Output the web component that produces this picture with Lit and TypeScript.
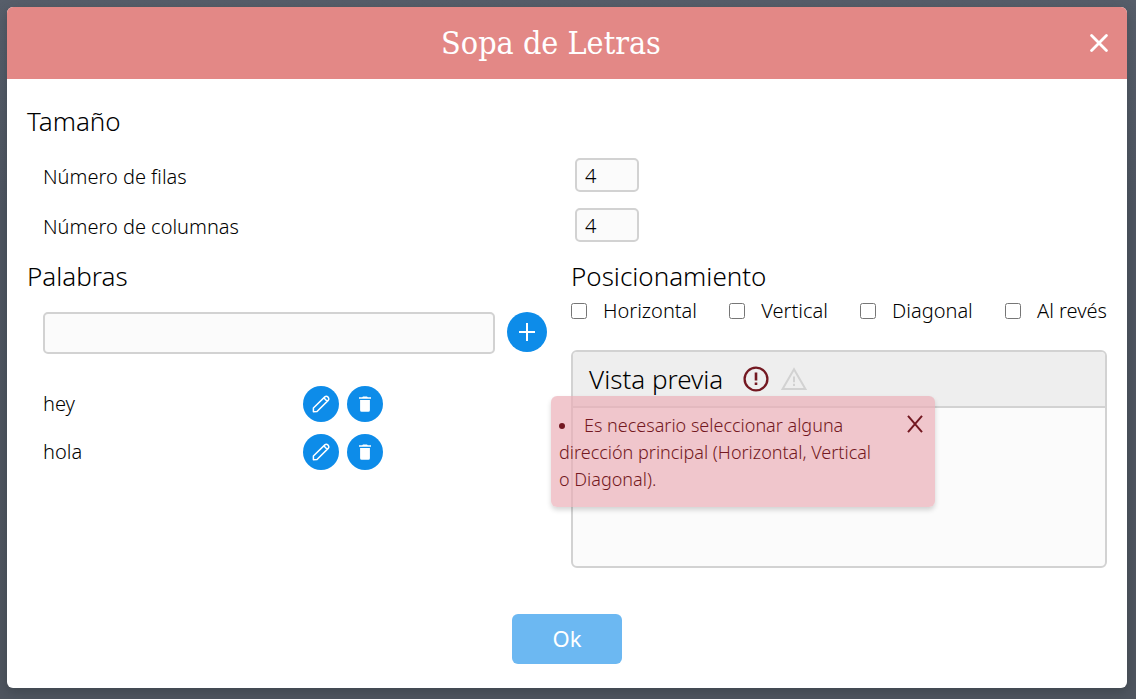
import { LitElement, html, css, svg } from "lit";
import { customElement, state } from "lit/decorators.js";

const icons = {
  close: svg`<svg viewBox="0 0 18 18" width="18" height="18" fill="none" stroke="currentColor" stroke-width="2.8" stroke-linecap="round"><path d="M1.6 1.6 16.4 16.4M16.4 1.6 1.6 16.4"/></svg>`,
  dismiss: svg`<svg viewBox="0 0 16 18" width="16" height="18" fill="none" stroke="currentColor" stroke-width="2"><path d="M1 .8 15 17.2M15 .8 1 17.2"/></svg>`,
  plus: svg`<svg viewBox="0 0 18 18" width="18" height="18" fill="none" stroke="currentColor" stroke-width="2"><path d="M9 0V18M1 9H17"/></svg>`,
  pencil: svg`<svg viewBox="0 0 18 18" width="18" height="18" fill="none" stroke="currentColor" stroke-width="1.5" stroke-linejoin="round"><path d="M1.4 16.8V13L12.8 1.9Q14.4 .6 16 2.1 17.5 3.8 16.2 5.4L5 16.5ZM12 3 15.1 6.2"/></svg>`,
  trash: svg`<svg viewBox="0 0 14 17" width="14" height="17" fill="currentColor"><path d="M1 1.2H4.2L5 .4H9L9.8 1.2H13V2.8H1ZM2.1 4H11.9V14.2Q11.9 15.8 10.3 15.8H3.7Q2.1 15.8 2.1 14.2Z"/></svg>`,
  error: svg`<svg viewBox="0 0 26 26" width="26" height="26" fill="none" stroke="#731821" stroke-width="2.3"><circle cx="13" cy="13" r="11.4"/><path d="M13 6.6V14.4M13 16.4V19" stroke-width="2.6"/></svg>`,
  warning: svg`<svg viewBox="0 0 26 24" width="26" height="24" fill="none" stroke="#d2d2d2" stroke-width="2"><path d="M13 2.2 24.4 22H1.6Z"/><path d="M13 9.4V15.2M13 16.8V19"/></svg>`,
};

@customElement("app-root")
export class AppRoot extends LitElement {
  @state() private words = ["hey", "hola"];
  @state() private showError = true;

  private directions = ["Horizontal", "Vertical", "Diagonal", "Al revés"];

  static styles = css`
    :host {
      display: block;
      box-sizing: border-box;
      min-height: 100vh;
      padding: 7px 9px 11px 7px;
      background: linear-gradient(#575e6a, #4e5561 30%, #4f555f);
      font: 300 20px/28px "Noto Sans", "Open Sans", sans-serif;
      color: #000;
    }
    * { box-sizing: border-box; }
    .modal {
      display: flex;
      flex-direction: column;
      min-height: calc(100vh - 18px);
      border-radius: 6px;
      overflow: hidden;
      background: #fff;
      box-shadow: 0 4px 12px rgba(40, 50, 56, 0.4);
    }
    .header {
      display: flex;
      align-items: center;
      padding: 0 12px;
      height: 72px;
      background: #e38886;
      color: #fff;
    }
    h1 {
      flex: 1;
      margin: 0;
      text-align: center;
      font: 400 32px/40px "Roboto Slab", "DejaVu Serif Condensed", "DejaVu Serif", serif;
    }
    h2 {
      margin: 0;
      font-size: 26px;
      line-height: 36px;
      font-weight: 300;
    }
    button {
      display: flex;
      align-items: center;
      justify-content: center;
      padding: 0;
      border: 0;
      background: none;
      color: inherit;
      font: inherit;
      cursor: pointer;
    }
    svg { display: block; }
    .close { width: 32px; height: 32px; }
    .body {
      flex: 1;
      display: flex;
      flex-direction: column;
      padding: 24px 20px;
    }
    .sizes {
      display: grid;
      gap: 16px;
      padding: 19px 16px 16px;
    }
    .size {
      display: grid;
      grid-template-columns: 1fr 1fr;
      align-items: center;
      column-gap: 16px;
    }
    .size label { padding-top: 4px; }
    input[type="text"],
    input[type="number"] {
      border: 2px solid #d2d2d2;
      border-radius: 5px;
      background: #fbfbfb;
      padding: 0 8px;
      font: inherit;
      color: inherit;
    }
    input[type="number"] {
      width: 64px;
      height: 34px;
      appearance: textfield;
    }
    .columns {
      display: grid;
      grid-template-columns: 520fr 536fr;
      column-gap: 24px;
    }
    .columns > * { min-width: 0; }
    .add {
      display: flex;
      align-items: flex-start;
      gap: 12px;
      padding: 18px 0 0 16px;
    }
    .add input { flex: 1; min-width: 0; height: 42px; }
    .round {
      width: 36px;
      height: 36px;
      border-radius: 50%;
      background: #0d8ce9;
      color: #fff;
    }
    .big { width: 40px; height: 40px; }
    .words {
      display: grid;
      gap: 12px;
      margin: 0;
      padding: 32px 164px 0 16px;
      list-style: none;
    }
    .word { display: flex; align-items: center; gap: 8px; }
    .name { flex: 1; }
    .checks {
      display: flex;
      justify-content: space-between;
      padding-top: 3px;
    }
    .check { display: flex; align-items: center; }
    .check input { width: 16px; height: 16px; margin: 0 16px 0 0; }
    .preview {
      position: relative;
      margin-top: 25px;
      height: 218px;
      border: 2px solid #d2d2d2;
      border-radius: 6px;
      background: #fbfbfb;
    }
    .bar {
      display: flex;
      align-items: center;
      gap: 12px;
      height: 56px;
      padding: 0 16px;
      border-bottom: 2px solid #d2d2d2;
      border-radius: 4px 4px 0 0;
      background: #eee;
    }
    .bar h2 { margin-right: 8px; }
    .alert {
      position: absolute;
      top: 44px;
      left: -22px;
      display: flex;
      align-items: flex-start;
      gap: 24px;
      width: 384px;
      padding: 16px 8px 14px;
      border-radius: 6px;
      background: rgba(235, 172, 182, 0.68);
      box-shadow: 0 3px 5px rgba(0, 0, 0, 0.16);
      color: #731821;
      font-size: 18px;
      line-height: 27px;
    }
    .alert ul {
      flex: 1;
      margin: 0;
      padding: 0;
      list-style-position: inside;
    }
    .dismiss { width: 24px; height: 24px; }
    .footer {
      display: flex;
      justify-content: center;
      margin-top: auto;
    }
    .ok {
      width: 110px;
      height: 50px;
      padding-bottom: 2px;
      border-radius: 6px;
      background: #6cb8f2;
      color: #fff;
      font-size: 22px;
      font-weight: 400;
    }
  `;

  private removeWord(index: number) {
    this.words = this.words.filter((_, i) => i !== index);
  }

  render() {
    return html`
      <main class="modal">
        <header class="header">
          <h1>Sopa de Letras</h1>
          <button class="close" aria-label="Cerrar">${icons.close}</button>
        </header>
        <div class="body">
          <h2>Tamaño</h2>
          <div class="sizes">
            <div class="size">
              <label for="rows">Número de filas</label>
              <input id="rows" type="number" value="4" />
            </div>
            <div class="size">
              <label for="cols">Número de columnas</label>
              <input id="cols" type="number" value="4" />
            </div>
          </div>
          <div class="columns">
            <section>
              <h2 id="words-title">Palabras</h2>
              <div class="add">
                <input type="text" aria-labelledby="words-title" />
                <button class="round big" aria-label="Añadir">${icons.plus}</button>
              </div>
              <ul class="words">
                ${this.words.map(
                  (word, i) => html`<li class="word">
                    <span class="name">${word}</span>
                    <button class="round" aria-label="Editar">${icons.pencil}</button>
                    <button class="round" aria-label="Eliminar" @click=${() => this.removeWord(i)}>${icons.trash}</button>
                  </li>`
                )}
              </ul>
            </section>
            <section>
              <h2>Posicionamiento</h2>
              <div class="checks">
                ${this.directions.map((d) => html`<label class="check"><input type="checkbox" />${d}</label>`)}
              </div>
              <div class="preview">
                <div class="bar">
                  <h2>Vista previa</h2>
                  ${icons.error}${icons.warning}
                </div>
                ${this.showError
                  ? html`<div class="alert" role="alert">
                      <ul><li>Es necesario seleccionar alguna dirección principal (Horizontal, Vertical o Diagonal).</li></ul>
                      <button class="dismiss" aria-label="Descartar" @click=${() => (this.showError = false)}>${icons.dismiss}</button>
                    </div>`
                  : null}
              </div>
            </section>
          </div>
          <footer class="footer"><button class="ok">Ok</button></footer>
        </div>
      </main>
    `;
  }
}
